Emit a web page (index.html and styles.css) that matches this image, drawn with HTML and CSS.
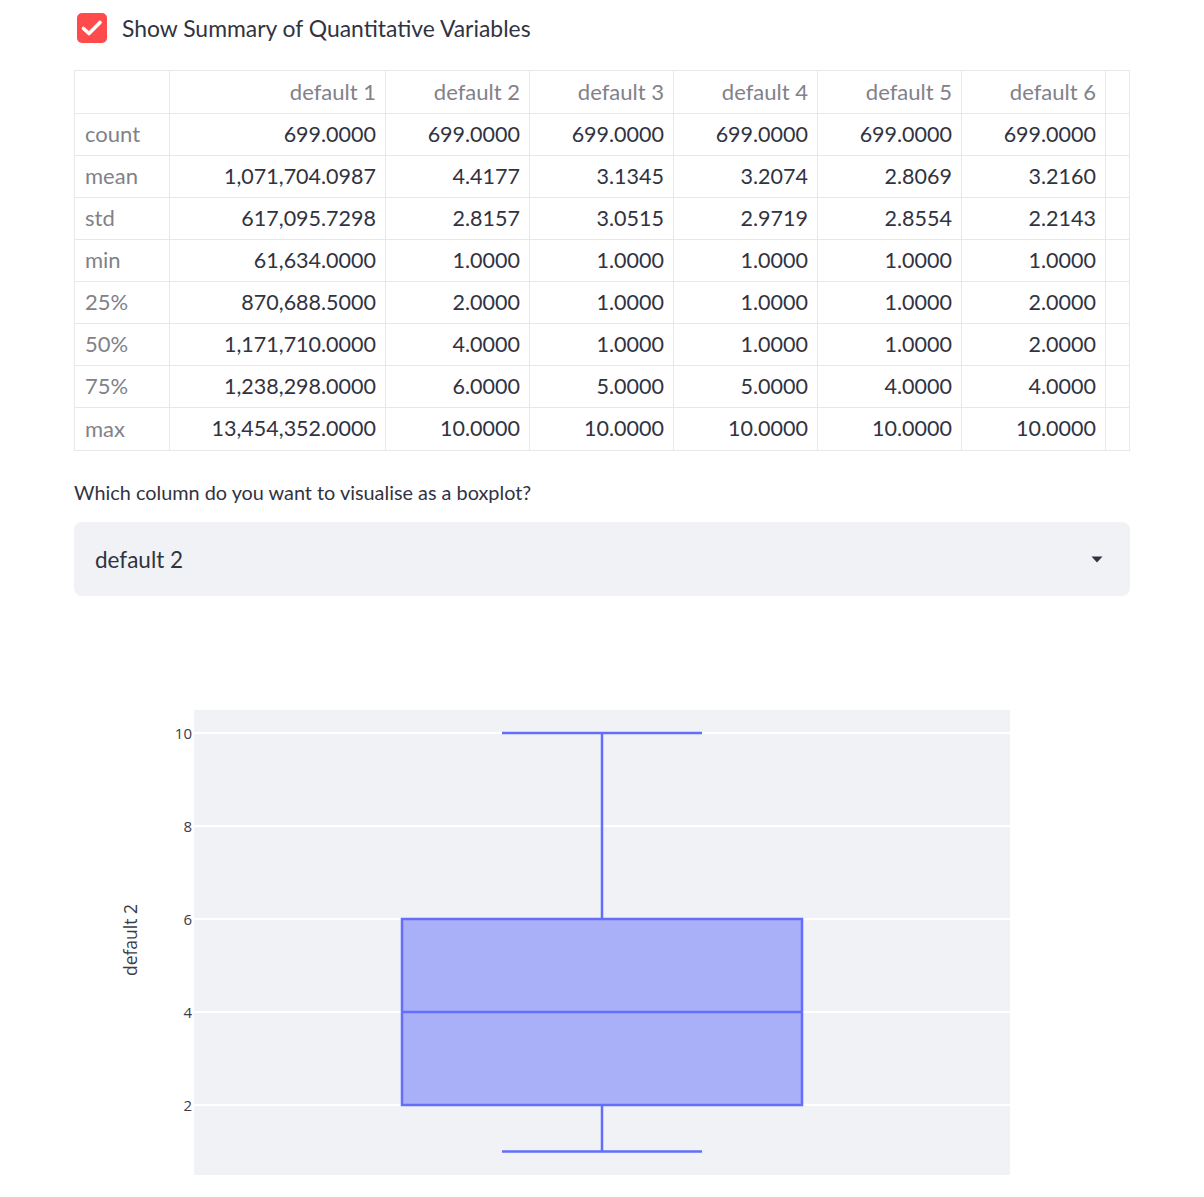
FILE: index.html
```html
<!DOCTYPE html>
<html>
<head>
<meta charset="utf-8">
<link rel="stylesheet" href="styles.css">
</head>
<body>
<main class="main">
  <label class="check-row">
    <span class="checkbox">
      <svg width="30" height="30" viewBox="0 0 30 30"><path d="M6.5 15.5 L12 20.5 L23 9.5" fill="none" stroke="#fff" stroke-width="3.6" stroke-linecap="round" stroke-linejoin="round"/></svg>
    </span>
    <span class="check-label">Show Summary of Quantitative Variables</span>
  </label>

  <div class="grid">
    <div class="row head">
      <div class="cell idx"></div>
      <div class="cell">default 1</div>
      <div class="cell">default 2</div>
      <div class="cell">default 3</div>
      <div class="cell">default 4</div>
      <div class="cell">default 5</div>
      <div class="cell">default 6</div>
      <div class="cell pad"></div>
    </div>
    <div class="row">
      <div class="cell idx">count</div>
      <div class="cell">699.0000</div><div class="cell">699.0000</div><div class="cell">699.0000</div><div class="cell">699.0000</div><div class="cell">699.0000</div><div class="cell">699.0000</div><div class="cell pad"></div>
    </div>
    <div class="row">
      <div class="cell idx">mean</div>
      <div class="cell">1,071,704.0987</div><div class="cell">4.4177</div><div class="cell">3.1345</div><div class="cell">3.2074</div><div class="cell">2.8069</div><div class="cell">3.2160</div><div class="cell pad"></div>
    </div>
    <div class="row">
      <div class="cell idx">std</div>
      <div class="cell">617,095.7298</div><div class="cell">2.8157</div><div class="cell">3.0515</div><div class="cell">2.9719</div><div class="cell">2.8554</div><div class="cell">2.2143</div><div class="cell pad"></div>
    </div>
    <div class="row">
      <div class="cell idx">min</div>
      <div class="cell">61,634.0000</div><div class="cell">1.0000</div><div class="cell">1.0000</div><div class="cell">1.0000</div><div class="cell">1.0000</div><div class="cell">1.0000</div><div class="cell pad"></div>
    </div>
    <div class="row">
      <div class="cell idx">25%</div>
      <div class="cell">870,688.5000</div><div class="cell">2.0000</div><div class="cell">1.0000</div><div class="cell">1.0000</div><div class="cell">1.0000</div><div class="cell">2.0000</div><div class="cell pad"></div>
    </div>
    <div class="row">
      <div class="cell idx">50%</div>
      <div class="cell">1,171,710.0000</div><div class="cell">4.0000</div><div class="cell">1.0000</div><div class="cell">1.0000</div><div class="cell">1.0000</div><div class="cell">2.0000</div><div class="cell pad"></div>
    </div>
    <div class="row">
      <div class="cell idx">75%</div>
      <div class="cell">1,238,298.0000</div><div class="cell">6.0000</div><div class="cell">5.0000</div><div class="cell">5.0000</div><div class="cell">4.0000</div><div class="cell">4.0000</div><div class="cell pad"></div>
    </div>
    <div class="row last">
      <div class="cell idx">max</div>
      <div class="cell">13,454,352.0000</div><div class="cell">10.0000</div><div class="cell">10.0000</div><div class="cell">10.0000</div><div class="cell">10.0000</div><div class="cell">10.0000</div><div class="cell pad"></div>
    </div>
  </div>

  <p class="select-label">Which column do you want to visualise as a boxplot?</p>
  <div class="select">
    <span class="select-value">default 2</span>
    <svg class="caret" width="12" height="7" viewBox="0 0 12 7"><path d="M0.5 0.5 H11.5 L6 6.5 Z" fill="#31333f"/></svg>
  </div>

  <svg class="chart" width="1056" height="577" viewBox="0 0 1056 577">
    <rect x="120" y="90" width="816" height="465" fill="#f0f2f6"/>
    <g stroke="#ffffff" stroke-width="2">
      <line x1="120" y1="113" x2="936" y2="113"/>
      <line x1="120" y1="206" x2="936" y2="206"/>
      <line x1="120" y1="299" x2="936" y2="299"/>
      <line x1="120" y1="392" x2="936" y2="392"/>
      <line x1="120" y1="485" x2="936" y2="485"/>
    </g>
    <g class="tick" text-anchor="end">
      <text x="118" y="119">10</text>
      <text x="118" y="212">8</text>
      <text x="118" y="305">6</text>
      <text x="118" y="398">4</text>
      <text x="118" y="491">2</text>
    </g>
    <text class="axis-title" transform="translate(63 320) rotate(-90)" text-anchor="middle">default 2</text>
    <g stroke="#636efa" stroke-width="2.5" fill="none">
      <line x1="528" y1="113" x2="528" y2="299"/>
      <line x1="428" y1="113" x2="628" y2="113"/>
      <line x1="528" y1="485" x2="528" y2="531.5"/>
      <line x1="428" y1="531.5" x2="628" y2="531.5"/>
      <rect x="328" y="299" width="400" height="186" fill="rgba(99,110,250,0.5)"/>
      <line x1="328" y1="392" x2="728" y2="392"/>
    </g>
  </svg>
</main>
</body>
</html>
```

FILE: styles.css
```css
html, body {
  margin: 0;
  padding: 0;
  background: #ffffff;
}

body {
  font-family: "Lato", "Open Sans", sans-serif;
  color: #31333f;
}

.main {
  width: 1056px;
  margin-left: 74px;
}

.check-row {
  display: flex;
  align-items: center;
  gap: 15px;
  height: 56px;
  padding-left: 3px;
}

.checkbox {
  width: 30px;
  height: 30px;
  border-radius: 5px;
  background: #ff4b4b;
  display: block;
}

.checkbox svg {
  display: block;
}

.check-label {
  font-size: 22.9px;
  color: #31333f;
}

.grid {
  margin-top: 14px;
  border-top: 1px solid #e6e8ee;
  border-left: 1px solid #e6e8ee;
  width: 1056px;
  box-sizing: border-box;
}

.row {
  display: grid;
  grid-template-columns: 95px 216px 144px 144px 144px 144px 144px 24px;
  height: 42px;
}

.row.head {
  height: 43px;
}

.row.last {
  height: 43px;
}

.cell {
  border-right: 1px solid #e6e8ee;
  border-bottom: 1px solid #e6e8ee;
  display: flex;
  align-items: center;
  justify-content: flex-end;
  padding: 0 9px 2px 0;
  font-size: 21.5px;
  color: #31333f;
  white-space: nowrap;
}

.head .cell {
  color: #808289;
  font-size: 22px;
}

.cell.idx {
  justify-content: flex-start;
  padding: 0 0 2px 10px;
  color: #808289;
  font-size: 22px;
}

.cell.pad {
  padding: 0;
}

.select-label {
  margin: 29px 0 0;
  font-size: 19.85px;
  line-height: 24px;
  color: #31333f;
}

.select {
  margin-top: 18px;
  height: 74px;
  background: #f0f2f6;
  border-radius: 8px;
  display: flex;
  align-items: center;
  justify-content: space-between;
  padding: 0 27px 0 21px;
}

.select-value {
  font-size: 22.5px;
  color: #31333f;
}

.caret {
  display: block;
}

.chart {
  display: block;
  margin-top: 24px;
}

.tick {
  font-family: "Open Sans", sans-serif;
  font-size: 15px;
  fill: #3a3c46;
}

.axis-title {
  font-family: "Open Sans", sans-serif;
  font-size: 17.5px;
  fill: #3a3c46;
}
```
